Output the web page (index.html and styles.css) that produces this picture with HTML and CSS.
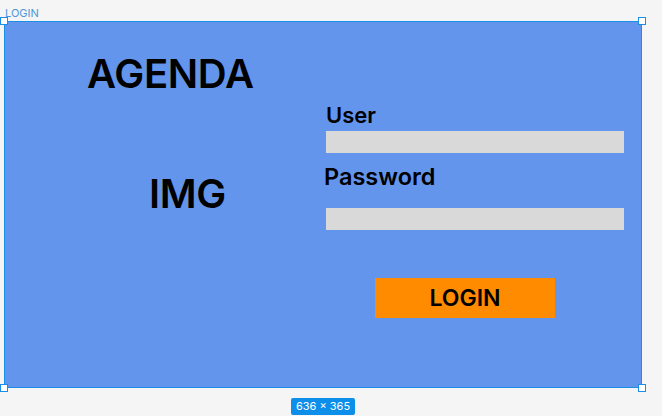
FILE: index.html
```html
<!DOCTYPE html>
<html>
<head>
<meta charset="utf-8">
<link rel="stylesheet" href="styles.css">
</head>
<body>
<div class="canvas">
  <div class="frame-name">LOGIN</div>
  <div class="frame">
    <div class="left">
      <div class="agenda">AGENDA</div>
      <div class="img">IMG</div>
    </div>
    <div class="right">
      <div class="label user">User</div>
      <div class="field first"></div>
      <div class="label pass">Password</div>
      <div class="field second"></div>
      <div class="btn">LOGIN</div>
    </div>
    <span class="handle tl"></span>
    <span class="handle tr"></span>
    <span class="handle bl"></span>
    <span class="handle br"></span>
  </div>
  <div class="size-row"><span class="badge">636 × 365</span></div>
</div>
</body>
</html>
```
FILE: styles.css
```css
html, body {
  margin: 0;
  padding: 0;
  background: #f5f5f5;
  font-family: Inter, "Noto Sans", "Liberation Sans", sans-serif;
  width: 662px;
  height: 416px;
  overflow: hidden;
}
.canvas {
  padding-left: 4px;
}
.frame-name {
  height: 21px;
  font-size: 11px;
  line-height: 11px;
  padding-top: 8px;
  box-sizing: border-box;
  padding-left: 1px;
  color: #4f97dc;
}
.frame {
  position: relative;
  box-sizing: border-box;
  width: 638px;
  height: 367px;
  background: #6495ed;
  border: 1px solid #1b8fe6;
  display: flex;
  color: #000;
}
.left {
  width: 319px;
  display: flex;
  flex-direction: column;
}
.agenda {
  margin-top: 32px;
  padding-left: 82px;
  font-size: 40px;
  line-height: 40px;
  font-weight: 600;
  letter-spacing: -0.3px;
}
.img {
  margin-top: 80px;
  padding-left: 144px;
  font-size: 40px;
  line-height: 40px;
  font-weight: 600;
  letter-spacing: -0.3px;
}
.right {
  flex: 1;
  padding-top: 82px;
  display: flex;
  flex-direction: column;
  align-items: flex-start;
}
.label {
  font-weight: 600;
}
.user {
  font-size: 22px;
  line-height: 22px;
  padding-left: 2px;
}
.pass {
  margin-top: 12px;
  font-size: 23.5px;
  line-height: 23px;
}
.field {
  width: 298px;
  height: 22px;
  margin-left: 2px;
  background: #d9d9d9;
}
.field.first {
  margin-top: 5px;
}
.field.second {
  margin-top: 20px;
}
.btn {
  margin-top: 48px;
  margin-left: 51px;
  width: 180px;
  height: 40px;
  background: #ff8c00;
  display: flex;
  align-items: center;
  justify-content: center;
  font-size: 23px;
  font-weight: 600;
}
.handle {
  position: absolute;
  width: 8px;
  height: 8px;
  box-sizing: border-box;
  background: #fff;
  border: 1.5px solid #1b8fe6;
}
.handle.tl { left: -5px; top: -5px; }
.handle.tr { right: -5px; top: -5px; }
.handle.bl { left: -5px; bottom: -5px; }
.handle.br { right: -5px; bottom: -5px; }
.size-row {
  width: 638px;
  text-align: center;
  margin-top: 6px;
}
.badge {
  display: inline-block;
  background: #0d8ee9;
  color: #fff;
  font-size: 11px;
  line-height: 17px;
  height: 17px;
  padding: 0 5px;
  border-radius: 2px;
}
```
